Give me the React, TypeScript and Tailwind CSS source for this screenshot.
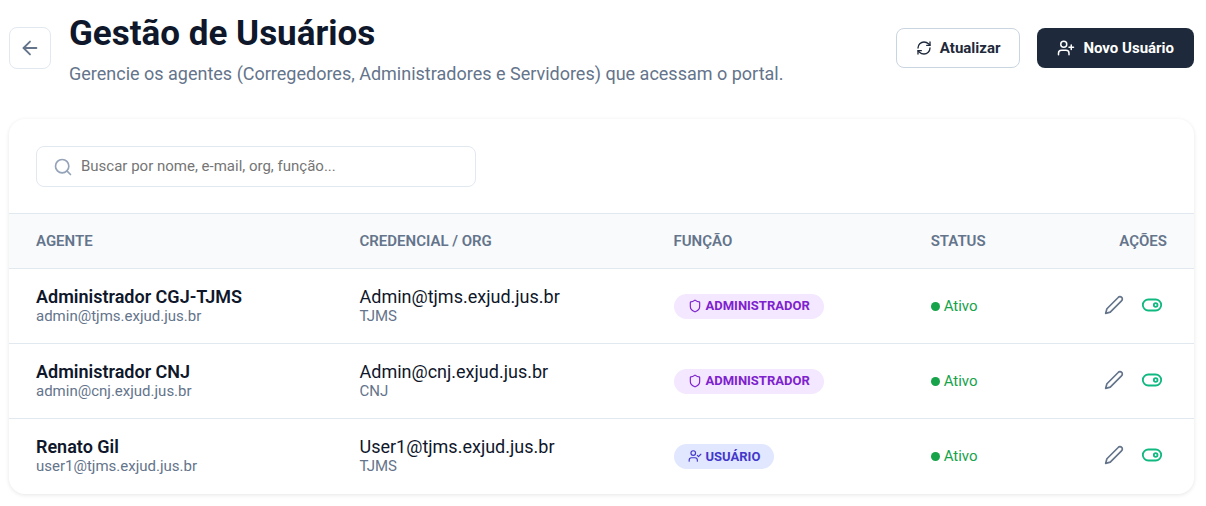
import React from 'react';
import { ArrowLeft, RefreshCw, Search, Shield, UserCheck, UserPlus } from 'lucide-react';

interface User {
  name: string;
  email: string;
  credential: string;
  org: string;
  role: 'admin' | 'user';
}

const users: User[] = [
  {
    name: 'Administrador CGJ-TJMS',
    email: 'admin@tjms.exjud.jus.br',
    credential: 'Admin@tjms.exjud.jus.br',
    org: 'TJMS',
    role: 'admin'
  },
  {
    name: 'Administrador CNJ',
    email: 'admin@cnj.exjud.jus.br',
    credential: 'Admin@cnj.exjud.jus.br',
    org: 'CNJ',
    role: 'admin'
  },
  {
    name: 'Renato Gil',
    email: 'user1@tjms.exjud.jus.br',
    credential: 'User1@tjms.exjud.jus.br',
    org: 'TJMS',
    role: 'user'
  }
];

interface IconProps {
  children: React.ReactNode;
  className?: string;
}

const Icon: React.FC<IconProps> = ({ children, className = '' }) => (
  <svg
    viewBox="0 0 24 24"
    fill="none"
    stroke="currentColor"
    strokeWidth="2"
    strokeLinecap="round"
    strokeLinejoin="round"
    className={className}
    aria-hidden="true"
  >
    {children}
  </svg>
);

const PencilIcon = () => (
  <Icon className="w-5 h-5">
    <path d="M17 3a2.85 2.83 0 1 1 4 4L7.5 20.5 2 22l1.5-5.5Z" />
  </Icon>
);

const ToggleIcon = () => (
  <Icon className="w-[22px] h-[22px]">
    <rect x="2" y="6" width="20" height="12" rx="6" />
    <circle cx="16" cy="12" r="2" />
  </Icon>
);

const RoleBadge: React.FC<{ role: User['role'] }> = ({ role }) =>
  role === 'admin' ? (
    <span className="inline-flex h-[25px] items-center gap-1 rounded-full bg-[#f3e8ff] px-[14px] align-middle text-[13px] font-bold text-[#7e22ce]">
      <Shield className="w-[14px] h-[14px]" />
      ADMINISTRADOR
    </span>
  ) : (
    <span className="inline-flex h-[25px] items-center gap-1 rounded-full bg-[#e0e7ff] px-[14px] align-middle text-[13px] font-bold text-[#4338ca]">
      <UserCheck className="w-[14px] h-[14px]" />
      USUÁRIO
    </span>
  );

const UserRow: React.FC<{ user: User }> = ({ user }) => (
  <tr className="h-[75px] border-t border-slate-200">
    <td className="px-[27px]">
      <div className="text-lg leading-5 font-semibold text-slate-900">{user.name}</div>
      <div className="text-[15px] leading-[18px] text-[#64748b]">{user.email}</div>
    </td>
    <td className="px-[27px]">
      <div className="text-lg leading-5">{user.credential}</div>
      <div className="text-[15px] leading-[18px] text-[#64748b]">{user.org}</div>
    </td>
    <td className="px-[27px]">
      <RoleBadge role={user.role} />
    </td>
    <td className="px-[27px]">
      <span className="flex items-center gap-1 text-[15px] text-[#16a34a]">
        <span className="h-[9px] w-[9px] rounded-full bg-[#16a34a]"></span>
        Ativo
      </span>
    </td>
    <td className="px-[27px]">
      <div className="flex items-center justify-end gap-[9px] pb-0.5">
        <button type="button" aria-label={`Editar ${user.name}`} className="p-1 text-[#64748b]">
          <PencilIcon />
        </button>
        <button type="button" aria-label={`Desativar ${user.name}`} className="p-1 text-[#10b981]">
          <ToggleIcon />
        </button>
      </div>
    </td>
  </tr>
);

const App: React.FC = () => (
  <div className="bg-white pt-2 pr-3 pb-3 pl-[9px] font-['Roboto',sans-serif] text-slate-900">
    <header className="flex items-center justify-between">
      <div className="flex items-center gap-[18px]">
        <button
          type="button"
          aria-label="Voltar"
          className="flex h-[42px] w-[42px] items-center justify-center rounded-lg border border-slate-200 text-[#64748b]"
        >
          <ArrowLeft className="h-[22px] w-[22px]" />
        </button>
        <div>
          <h1 className="text-[35px] leading-[52px] font-bold">Gestão de Usuários</h1>
          <p className="text-lg leading-7 text-[#64748b]">
            Gerencie os agentes (Corregedores, Administradores e Servidores) que acessam o portal.
          </p>
        </div>
      </div>
      <div className="flex gap-[17px]">
        <button
          type="button"
          className="flex h-10 items-center gap-2 rounded-lg border border-slate-300 px-[19px] text-[15px] font-bold text-[#1e293b]"
        >
          <RefreshCw className="h-4 w-4" />
          Atualizar
        </button>
        <button
          type="button"
          className="flex h-10 items-center gap-2 rounded-lg bg-[#1e293b] px-5 text-[15px] font-bold text-white"
        >
          <UserPlus className="h-[18px] w-[18px]" />
          Novo Usuário
        </button>
      </div>
    </header>

    <main className="mt-[31px] overflow-hidden rounded-2xl bg-white shadow-[0_1px_4px_rgba(0,0,0,0.1)]">
      <div className="px-[27px] pt-[27px] pb-[26px]">
        <label className="flex h-[41px] w-[440px] max-w-full items-center gap-2 rounded-lg border border-slate-200 px-4">
          <Search className="h-5 w-5 shrink-0 text-[#94a3b8]" />
          <input
            type="text"
            aria-label="Buscar usuários"
            placeholder="Buscar por nome, e-mail, org, função..."
            className="min-w-0 flex-1 text-[15px] outline-none placeholder:text-[#757575]"
          />
        </label>
      </div>
      <table className="w-full table-fixed border-collapse text-left">
        <thead>
          <tr className="h-[55px] border-t border-slate-200 bg-slate-50 text-[15px] text-[#64748b]">
            <th className="w-[27.3%] px-[27px] font-semibold">AGENTE</th>
            <th className="w-[26.5%] px-[27px] font-semibold">CREDENCIAL / ORG</th>
            <th className="w-[21.7%] px-[27px] font-semibold">FUNÇÃO</th>
            <th className="px-[27px] font-semibold">STATUS</th>
            <th className="px-[27px] text-right font-semibold">AÇÕES</th>
          </tr>
        </thead>
        <tbody>
          {users.map((user) => (
            <UserRow key={user.email} user={user} />
          ))}
        </tbody>
      </table>
    </main>
  </div>
);

export default App;
